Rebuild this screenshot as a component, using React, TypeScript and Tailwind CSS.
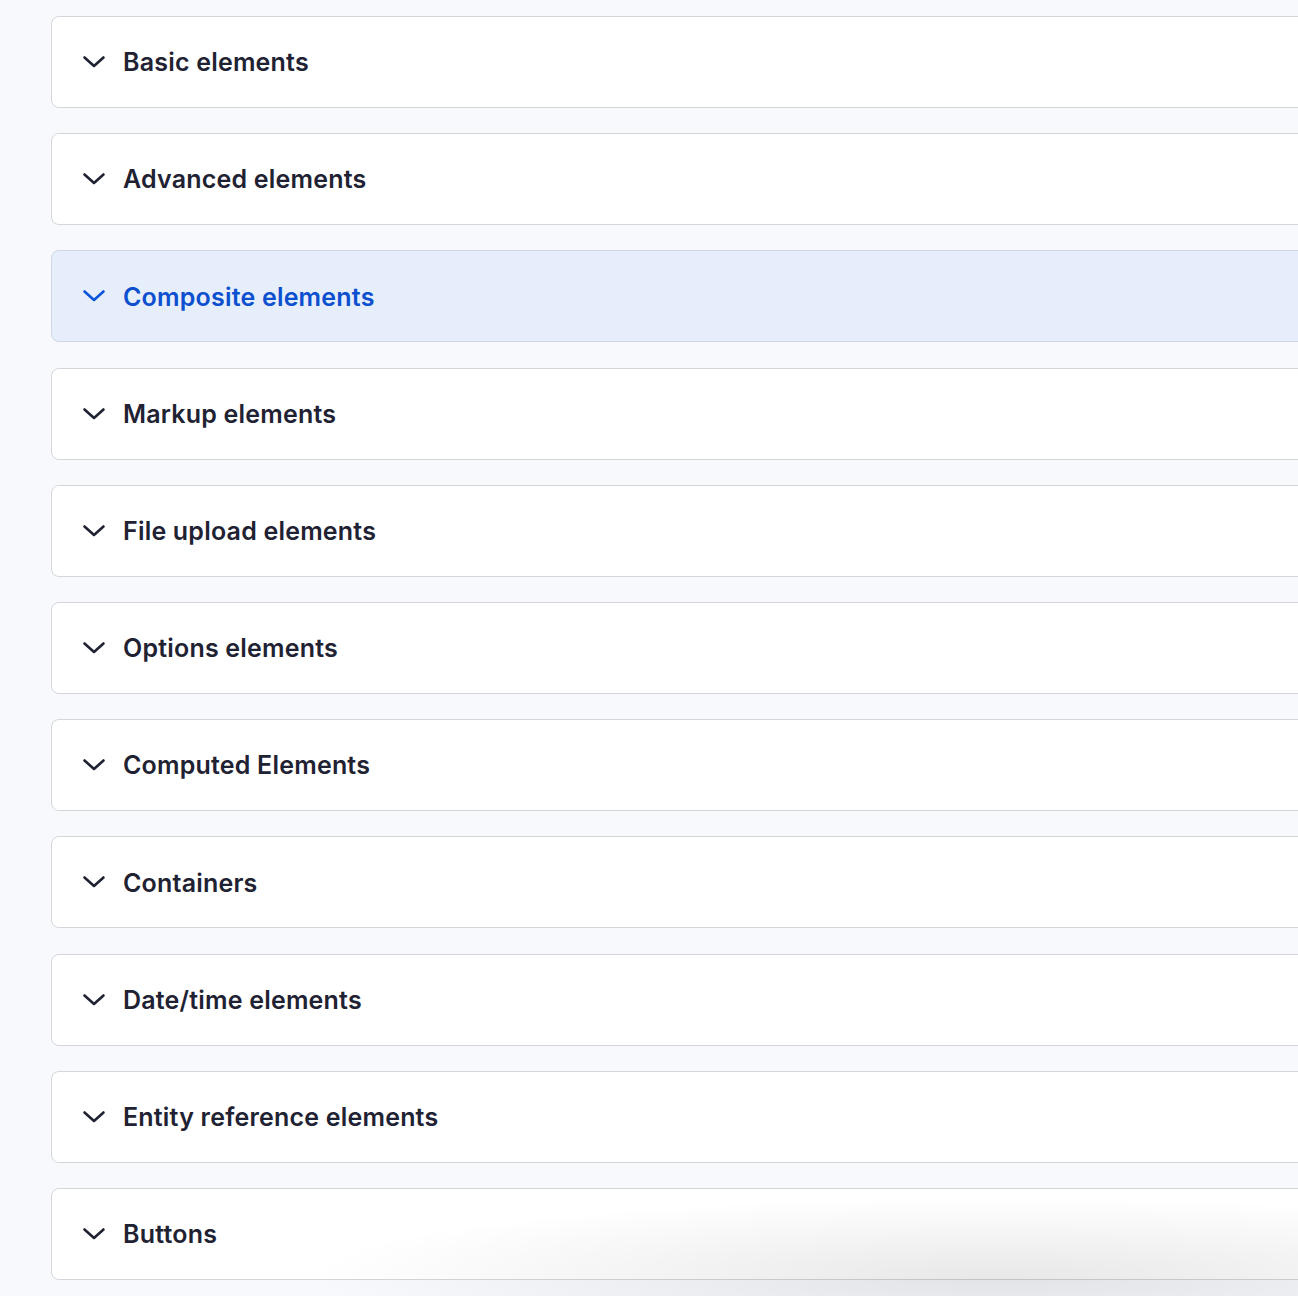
import React from "react";

const items = [
  "Basic elements",
  "Advanced elements",
  "Composite elements",
  "Markup elements",
  "File upload elements",
  "Options elements",
  "Computed Elements",
  "Containers",
  "Date/time elements",
  "Entity reference elements",
  "Buttons",
];

function Chevron({ active }: { active: boolean }) {
  return (
    <svg
      width="24"
      height="14"
      viewBox="0 0 24 14"
      fill="none"
      className={active ? "text-[#0c55d8]" : "text-[#1f2232]"}
    >
      <polyline
        points="2.5,2.5 12,11 21.5,2.5"
        stroke="currentColor"
        strokeWidth="2.6"
        strokeLinecap="round"
        strokeLinejoin="round"
      />
    </svg>
  );
}

export default function App() {
  return (
    <div className="relative h-[1296px] w-full overflow-hidden bg-[#f7f9fd] font-['Inter','Noto_Sans',sans-serif]">
      <div className="flex flex-col gap-[25.2px] pl-[51px] pt-4">
        {items.map((label, i) => {
          const active = i === 2;
          return (
            <div
              key={label}
              className={
                "-mr-4 flex h-[92px] items-center rounded-lg border pl-[30px] " +
                (active
                  ? "border-[#d0d6e2] bg-[#e6eefb]"
                  : "border-[#d5d6dc] bg-white")
              }
            >
              <Chevron active={active} />
              <span
                className={
                  "ml-[17px] mt-[2px] text-[25px] font-semibold tracking-[0.2px] " +
                  (active ? "text-[#0c4fcf]" : "text-[#1f2232]")
                }
              >
                {label}
              </span>
            </div>
          );
        })}
      </div>
      <div className="pointer-events-none absolute bottom-[-60px] left-[300px] right-[-400px] h-[160px] bg-[radial-gradient(ellipse_at_center,rgba(0,0,0,0.09),rgba(0,0,0,0.03)_45%,transparent_70%)]" />
    </div>
  );
}
